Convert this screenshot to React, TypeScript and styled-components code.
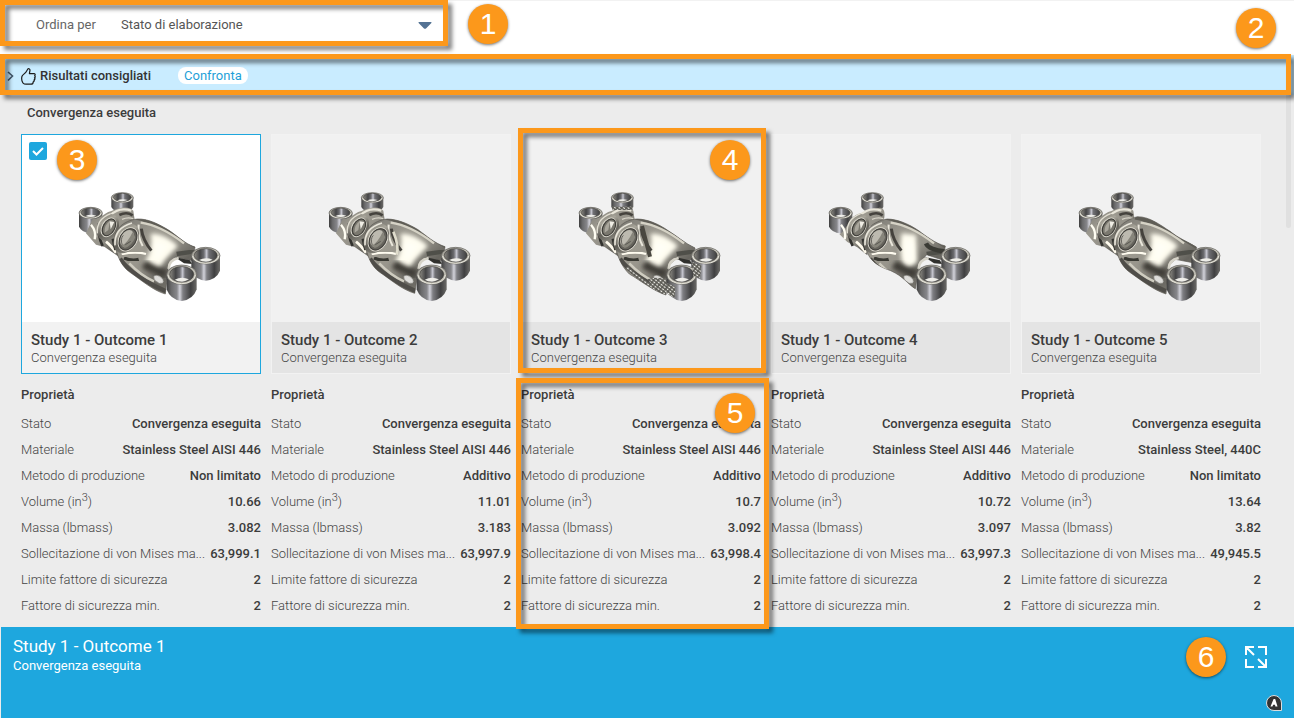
import React from "react";
import styled, { createGlobalStyle } from "styled-components";

const GlobalStyle = createGlobalStyle`
  *, *::before, *::after { box-sizing: border-box; }
  body {
    margin: 0;
    background: #ececec;
    color: #3c3c3c;
    font-family: Roboto, "Noto Sans", sans-serif;
    font-size: 13px;
    line-height: 18px;
  }
  button, select, input { font: inherit; }
`;

const Page = styled.div`
  display: flex;
  flex-direction: column;
  min-height: 100vh;
  overflow-x: hidden;
`;

const Frame = styled.span<{ $inset: string }>`
  position: absolute;
  z-index: 2;
  inset: ${(p) => p.$inset};
  border: 5px solid #fc981b;
  filter: drop-shadow(4px 4px 2px rgba(0, 0, 0, 0.5));
  pointer-events: none;
`;

const Callout = styled.span<{ $place: string }>`
  position: absolute;
  z-index: 3;
  inset: ${(p) => p.$place};
  width: 40px;
  height: 40px;
  border-radius: 50%;
  background: #fc981b;
  box-shadow: 0 1px 3px rgba(0, 0, 0, 0.55);
  color: #fff;
  font-family: "Liberation Sans", sans-serif;
  font-size: 30px;
  line-height: 40px;
  text-align: center;
`;

const Toolbar = styled.header`
  position: relative;
  height: 55px;
  border-top: 1px solid #f2f2f2;
  background: #fff;
`;

const SortField = styled.div`
  position: relative;
  display: flex;
  align-items: center;
  width: 448px;
  height: 46px;
  padding: 2px 9px 0 36px;
  color: #666;
`;

const SortLabel = styled.label`
  flex: 0 0 85px;
`;

const SortSelect = styled.select`
  flex: 1;
  height: 32px;
  padding: 0;
  border: 0;
  background: transparent;
  color: #555;
  appearance: none;
  outline: none;
`;

const SelectArrow = styled.svg`
  position: absolute;
  right: 16px;
  width: 14px;
  height: 7px;
  fill: #547394;
  pointer-events: none;
`;

const Banner = styled.section`
  position: relative;
  display: flex;
  align-items: center;
  height: 40px;
  padding: 0 6px;
  background: #c9ecff;
`;

const Disclosure = styled.button`
  display: flex;
  align-items: center;
  padding: 2px 0 0;
  border: 0;
  background: none;
  color: #333;
  font-weight: 500;

  svg:first-child { margin-right: 6px; }
  svg:last-of-type { margin-right: 4px; }
`;

const CompareButton = styled.button`
  height: 17px;
  margin-left: 27px;
  padding: 0 6px;
  border: 0;
  border-radius: 8px;
  background: #fff;
  color: #1f9fd8;
  line-height: 17px;
`;

const Results = styled.main`
  position: relative;
  padding: 8px 33px 8px 21px;
`;

const ScrollThumb = styled.span`
  position: absolute;
  top: 0;
  right: 3px;
  width: 5px;
  height: 133px;
  border-radius: 0 0 3px 3px;
  background: #e0e0e0;
`;

const GroupTitle = styled.h2`
  margin: 0 0 12px 6px;
  font-size: 13px;
  line-height: 19px;
  font-weight: 500;
`;

const OutcomeGrid = styled.div`
  display: grid;
  grid-template-columns: repeat(5, minmax(0, 1fr));
  column-gap: 10px;
`;

const Outcome = styled.article`
  position: relative;
`;

const Card = styled.div<{ $selected: boolean }>`
  position: relative;
  border: 1px solid ${(p) => (p.$selected ? "#1ea7de" : "#f2f2f2")};
  background: ${(p) => (p.$selected ? "#fff" : "#f1f1f1")};
`;

const Preview = styled.svg`
  display: block;
  width: 100%;
  height: 187px;
`;

const CardFooter = styled.div<{ $selected: boolean }>`
  height: 51px;
  padding: 8px 9px;
  background: ${(p) => (p.$selected ? "#f2f2f2" : "#e4e4e4")};
`;

const CardTitle = styled.h3`
  margin: 0;
  font-size: 15px;
  line-height: 20px;
  font-weight: 500;
`;

const CardStatus = styled.p`
  margin: 0;
  line-height: 16px;
  color: #444;
  font-weight: 300;
`;

const Tick = styled.input`
  position: absolute;
  top: 7px;
  left: 7px;
  width: 18px;
  height: 18px;
  margin: 0;
  border-radius: 2px;
  background: #1ea7de;
  appearance: none;
`;

const TickMark = styled.svg`
  position: absolute;
  top: 7px;
  left: 7px;
  width: 18px;
  height: 18px;
  pointer-events: none;
`;

const Properties = styled.div`
  position: relative;
  margin-top: 10px;
`;

const PropertyTable = styled.table`
  display: block;
  width: 100%;
  border-spacing: 0;

  caption {
    display: block;
    height: 27px;
    line-height: 22px;
    text-align: left;
    font-weight: 500;
  }
  tbody { display: block; }
  tr {
    display: flex;
    justify-content: space-between;
    height: 26px;
    line-height: 26px;
    white-space: nowrap;
  }
  th {
    padding: 0;
    color: #444;
    font-weight: 300;
    text-align: left;
  }
  td {
    padding: 0;
    font-weight: 500;
  }
  sup {
    font-size: 11px;
    line-height: 0;
  }
`;

const StatusBar = styled.footer`
  position: relative;
  display: flex;
  flex: 1;
  align-items: flex-start;
  justify-content: space-between;
  min-height: 91px;
  margin-left: 1px;
  padding: 9px 27px 9px 12px;
  background: #1ea7de;
  color: #fff;
`;

const StatusTitle = styled.h2`
  margin: 0;
  font-size: 17px;
  line-height: 20px;
  font-weight: 400;
`;

const StatusText = styled.p`
  margin: 0;
  line-height: 20px;
`;

const ExpandButton = styled.button`
  width: 22px;
  height: 22px;
  margin-top: 10px;
  padding: 0;
  border: 0;
  background: none;
  color: #fff;

  svg { display: block; }
`;

const Badge = styled.svg`
  position: absolute;
  right: 12px;
  bottom: 7px;
`;

const HiddenDefs = styled.svg`
  position: absolute;
`;

const PartDefs = () => (
  <HiddenDefs width="0" height="0" aria-hidden="true">
    <defs>
      <linearGradient id="tube" x1="0" x2="1" y1="0" y2="0">
        <stop offset="0" stopColor="#3f3f3f" />
        <stop offset="0.15" stopColor="#6a6a6b" />
        <stop offset="0.34" stopColor="#87878b" />
        <stop offset="0.44" stopColor="#d2d2da" />
        <stop offset="0.54" stopColor="#7f7f83" />
        <stop offset="0.8" stopColor="#404041" />
        <stop offset="1" stopColor="#6c6b68" />
      </linearGradient>
      <linearGradient id="bore" x1="0" x2="1" y1="0" y2="0">
        <stop offset="0" stopColor="#8b8982" />
        <stop offset="0.25" stopColor="#444445" />
        <stop offset="0.42" stopColor="#6c6c70" />
        <stop offset="0.54" stopColor="#c6c6cf" />
        <stop offset="0.64" stopColor="#707074" />
        <stop offset="1" stopColor="#3e3e3e" />
      </linearGradient>
      <linearGradient id="rim" x1="0" x2="1" y1="0" y2="1">
        <stop offset="0" stopColor="#8d8b83" />
        <stop offset="0.5" stopColor="#c9c7bd" />
        <stop offset="1" stopColor="#a5a39a" />
      </linearGradient>
      <linearGradient id="metal" x1="0.1" x2="0.8" y1="0.1" y2="0.9">
        <stop offset="0" stopColor="#83817a" />
        <stop offset="0.3" stopColor="#9d9a90" />
        <stop offset="0.55" stopColor="#96938a" />
        <stop offset="0.8" stopColor="#66645e" />
        <stop offset="1" stopColor="#7c7a73" />
      </linearGradient>
      <linearGradient id="ring" x1="0" x2="1" y1="0" y2="1">
        <stop offset="0" stopColor="#69675f" />
        <stop offset="0.3" stopColor="#a9a69b" />
        <stop offset="0.6" stopColor="#605e57" />
        <stop offset="1" stopColor="#96948b" />
      </linearGradient>
      <filter id="soft" x="-40%" y="-40%" width="180%" height="180%">
        <feGaussianBlur stdDeviation="7" />
      </filter>
      <filter id="fine" x="-40%" y="-40%" width="180%" height="180%">
        <feGaussianBlur stdDeviation="2" />
      </filter>
      <pattern id="lattice" width="11" height="8" patternUnits="userSpaceOnUse" patternTransform="rotate(38)">
        <rect width="11" height="8" fill="#5a5953" />
        <ellipse cx="5" cy="4" rx="4" ry="2" fill="#f1f0ea" />
      </pattern>
    </defs>
  </HiddenDefs>
);

const Tube = ({ x, y, rx, ry, depth }: { x: number; y: number; rx: number; ry: number; depth: number }) => (
  <g>
    <path
      d={`M${x - rx} ${y} V${y + depth - ry * 0.4} Q${x - rx * 0.75} ${y + depth + ry * 0.65} ${x} ${y + depth + ry * 0.8} Q${x + rx * 0.75} ${y + depth + ry * 0.65} ${x + rx} ${y + depth - ry * 0.4} V${y} Z`}
      fill="url(#tube)"
    />
    <ellipse cx={x} cy={y} rx={rx} ry={ry} fill="url(#rim)" stroke="#5a5954" strokeWidth="2" />
    <path
      d={`M${x - rx + 4} ${y + 1} A${rx - 4} ${ry - 3} 0 0 0 ${x + rx - 4} ${y + 1}`}
      fill="none"
      stroke="#e6e4da"
      strokeWidth="3"
    />
    <ellipse cx={x} cy={y - 1} rx={rx * 0.8} ry={ry * 0.8} fill="url(#bore)" stroke="#45443f" strokeWidth="2" />
    <path
      d={`M${x - rx * 0.46} ${y + ry * 0.52} Q${x} ${y + ry * 0.14} ${x + rx * 0.48} ${y + ry * 0.48} Q${x} ${y + ry * 0.92} ${x - rx * 0.46} ${y + ry * 0.52} Z`}
      fill="#efeee9"
    />
  </g>
);

const BODIES = [
  "M163 184 C162 148 190 122 232 117 C262 116 292 130 322 148 C350 165 374 192 405 201 L398 242 L345 231 L326 252 L316 342 C280 332 242 299 210 277 C184 259 169 226 163 184 Z",
  "M163 184 C162 148 190 122 232 117 C264 118 296 132 324 149 C350 168 374 190 405 200 L398 242 L346 234 L328 252 L314 340 C274 328 240 297 208 276 C184 259 170 226 163 184 Z",
  "M163 184 C162 148 190 119 232 117 C264 118 296 132 326 153 C350 167 374 190 405 204 L398 240 L346 238 L326 256 L318 345 C278 332 240 300 208 282 C190 264 172 238 163 184 Z",
  "M165 184 C162 148 190 124 232 117 C264 118 296 132 326 152 C350 170 376 190 406 198 L398 240 L350 224 L328 250 L316 326 C290 310 282 290 242 272 C202 258 168 240 165 184 Z",
  "M163 184 C162 148 190 122 232 110 C270 110 302 136 330 154 C356 176 386 186 410 202 L398 248 L346 238 L326 256 L318 342 C280 330 240 298 208 276 C184 259 170 226 163 184 Z",
];

const Bracket = ({ index }: { index: number }) => {
  const clip = `body-${index}`;
  const body = BODIES[index];
  const meshed = index === 2;
  const narrow = index === 3;
  return (
    <Preview viewBox="-114 -135 714 561" aria-hidden="true">
      <clipPath id={clip}>
        <path d={body} />
      </clipPath>
      <Tube x={187} y={53} rx={33} ry={15} depth={34} />
      <Tube x={92} y={99} rx={35} ry={17} depth={48} />
      {/* neck joining the rear tubes */}
      <path
        d={
          narrow
            ? "M88 162 C106 158 114 118 144 102 L205 84 C224 80 226 100 222 118 L176 142 L172 226 L142 202 L112 186 Z"
            : "M78 160 L98 116 C122 118 130 100 152 94 C178 82 206 76 220 92 L224 120 L182 150 L176 230 L134 201 L108 194 Z"
        }
        fill="url(#metal)"
      />
      <path d="M93 134 Q110 154 104 178" fill="none" stroke="#fffdf2" strokeWidth="7" filter="url(#fine)" />
      <path d="M117 130 Q112 166 128 198" fill="none" stroke="#33322f" strokeWidth="8" filter="url(#fine)" />
      <path d="M150 107 Q176 80 214 92" fill="none" stroke="#e8e5d9" strokeWidth="7" filter="url(#fine)" />
      <path d="M178 105 Q200 94 218 106" fill="none" stroke="#45433e" strokeWidth="8" filter="url(#fine)" />
      <path d="M186 118 Q204 110 220 116" fill="none" stroke="#d8d5c9" strokeWidth="4" filter="url(#fine)" />
      <path d="M138 185 Q152 196 168 218" fill="none" stroke="#fffbee" strokeWidth="8" filter="url(#fine)" />
      <path d="M158 176 Q162 196 166 210" fill="none" stroke="#33322f" strokeWidth="7" filter="url(#fine)" />
      {/* rear ring */}
      <ellipse cx="144" cy="142" rx="31" ry="42" transform="rotate(26 144 142)" fill="url(#ring)" />
      <path d="M112 160 Q108 118 152 101" fill="none" stroke="#e2dfd3" strokeWidth="4" filter="url(#fine)" />
      <ellipse cx="146" cy="142" rx="20" ry="30" transform="rotate(30 146 142)" fill="#6e6c65" stroke="#dcdacf" strokeWidth="3" />
      <ellipse cx="147" cy="142" rx="17" ry="27" transform="rotate(30 147 142)" fill="#7a786f" stroke="#3d3c38" strokeWidth="3" />
      <path d="M134 158 Q132 134 150 123 L145 150 Z" fill="#aaa79d" />
      <path d="M149 124 L163 126 L152 148 Z" fill="#f0eee6" />
      {/* main web */}
      <path d={body} fill="url(#metal)" stroke="#5a5851" strokeWidth="2" />
      <g clipPath={`url(#${clip})`}>
        <path d="M225 112 C286 122 350 162 410 200" fill="none" stroke="#5f5d56" strokeWidth="13" filter="url(#fine)" />
        <path d="M242 128 C286 134 328 156 372 190" fill="none" stroke="#d6d3c6" strokeWidth="7" filter="url(#fine)" />
        <path
          d={narrow ? "M275 160 L318 164 L322 246 L286 272 Q264 226 275 160 Z" : "M272 162 Q308 156 354 198 L318 236 L288 276 L256 240 Q280 212 272 162 Z"}
          fill="#fffdf0"
          filter="url(#soft)"
        />
        <path
          d={narrow ? "M286 180 L308 184 L308 236 L290 250 Z" : "M286 184 L326 196 L304 226 L284 246 Z"}
          fill="#fffef6"
          filter="url(#soft)"
        />
        <path d="M244 146 Q248 180 274 212" fill="none" stroke="#45433e" strokeWidth="9" filter="url(#fine)" />
        <path d="M236 134 Q232 170 248 198" fill="none" stroke="#eae7dc" strokeWidth="6" filter="url(#fine)" />
        <path d="M252 252 Q274 268 318 282" fill="none" stroke="#3f3e38" strokeWidth="26" filter="url(#soft)" />
        <path d="M185 222 Q230 214 258 222" fill="none" stroke="#fffcf0" strokeWidth="7" filter="url(#fine)" />
        <path d="M192 234 Q216 244 236 238" fill="none" stroke="#393833" strokeWidth="10" filter="url(#fine)" />
        <path d="M180 236 Q214 286 318 334" fill="none" stroke="#504e48" strokeWidth="13" filter="url(#fine)" />
        <path d="M208 250 Q242 286 282 304" fill="none" stroke="#cfccc0" strokeWidth="7" filter="url(#fine)" />
        <ellipse cx="296" cy="298" rx="16" ry="9" transform="rotate(35 296 298)" fill="#deddda" filter="url(#fine)" />
        <path d="M350 222 L404 214" stroke="#504f49" strokeWidth="13" filter="url(#fine)" />
        {index === 1 && <path d="M250 155 Q268 198 260 224" fill="none" stroke="#dfdccc" strokeWidth="8" filter="url(#fine)" />}
        {meshed && (
          <>
            <path d="M246 138 L270 230" stroke="#49473f" strokeWidth="12" filter="url(#fine)" />
            <path d="M262 298 Q286 288 322 298 L322 350 L300 342 Z" fill="url(#lattice)" />
            <path d="M200 262 Q250 310 316 340" fill="none" stroke="url(#lattice)" strokeWidth="10" />
          </>
        )}
        {narrow && <path d="M348 190 Q356 210 406 214" fill="none" stroke="#3b3b36" strokeWidth="13" filter="url(#fine)" />}
      </g>
      {/* front ring */}
      <ellipse cx="199" cy="175" rx="34" ry="48" transform="rotate(32 199 175)" fill="url(#ring)" />
      <path d="M165 196 Q162 144 216 129" fill="none" stroke="#e8e5da" strokeWidth="5" filter="url(#fine)" />
      <ellipse cx="204" cy="178" rx="27" ry="37" transform="rotate(30 204 178)" fill="#8c8980" stroke="#dedbd0" strokeWidth="3" />
      <ellipse cx="204" cy="178" rx="24" ry="34" transform="rotate(30 204 178)" fill="#66645d" stroke="#403f3b" strokeWidth="3" />
      <ellipse cx="201" cy="175" rx="18" ry="27" transform="rotate(30 201 175)" fill="#bdbab0" />
      <path d="M186 196 Q202 190 218 156 L226 172 Q216 198 194 204 Z" fill="#87857b" />
      <path d="M187 196 Q180 176 190 166 M212 184 L196 194" fill="none" stroke="#3f3e3b" strokeWidth="2" />
      {/* slot between the front lugs */}
      {index < 4 && <path d="M344 231 L390 241 L396 252 L372 250 Z" fill="#30302d" />}
      <Tube x={437} y={227} rx={43} ry={25} depth={55} />
      <path d="M326 266 Q326 240 356 234" fill="none" stroke="#d6d3c8" strokeWidth="8" />
      <Tube x={365} y={284} rx={45} ry={29} depth={56} />
      {meshed && (
        <>
          <path d="M321 310 L346 320 L344 352 Q326 348 321 338 Z" fill="url(#lattice)" />
          <path d="M396 246 L424 256 L420 294 L400 288 Z" fill="url(#lattice)" />
          <path d="M156 80 H218 V90 H156 Z" fill="url(#lattice)" />
        </>
      )}
    </Preview>
  );
};

const OUTCOMES = [
  { material: "Stainless Steel AISI 446", method: "Non limitato", volume: "10.66", mass: "3.082", stress: "63,999.1" },
  { material: "Stainless Steel AISI 446", method: "Additivo", volume: "11.01", mass: "3.183", stress: "63,997.9" },
  { material: "Stainless Steel AISI 446", method: "Additivo", volume: "10.7", mass: "3.092", stress: "63,998.4" },
  { material: "Stainless Steel AISI 446", method: "Additivo", volume: "10.72", mass: "3.097", stress: "63,997.3" },
  { material: "Stainless Steel, 440C", method: "Non limitato", volume: "13.64", mass: "3.82", stress: "49,945.5" },
];

const App = () => (
  <Page>
    <GlobalStyle />
    <PartDefs />
    <Toolbar>
      <SortField>
        <SortLabel htmlFor="sort">Ordina per</SortLabel>
        <SortSelect id="sort" defaultValue="stato">
          <option value="stato">Stato di elaborazione</option>
        </SortSelect>
        <SelectArrow viewBox="0 0 14 7">
          <path d="M1 0H13Q14 .4 13.4 1L8 6.4Q7 7 6 6.4L.6 1Q0 .4 1 0Z" />
        </SelectArrow>
        <Frame $inset="-1px 0 1px 0" />
      </SortField>
      <Callout $place="3px auto auto 468px">1</Callout>
      <Callout $place="7px 18px auto auto">2</Callout>
    </Toolbar>
    <Banner>
      <Disclosure aria-expanded="false">
        <svg width="9" height="12" viewBox="0 0 9 12" fill="none" stroke="#42576b" strokeWidth="1.6">
          <path d="M2 2L6.5 6L2 10.5" />
        </svg>
        <svg width="15" height="17" viewBox="0 0 15 17" fill="none" stroke="#1c1c1c" strokeWidth="1.2" strokeLinejoin="round">
          <path d="M7 .7C8 .4 9 1 9 2.2L8.4 5.6H13.2C14.4 5.8 14.5 7.3 13.6 7.7C14.5 8.1 14.5 9.5 13.5 9.9C14.3 10.4 14 11.6 13 12C13.6 12.6 13.1 13.7 12.2 13.9C12.2 15.4 11.2 16.2 9.8 16.2H5C3.7 16.2 2.7 15.7 1.9 14.8C.8 13.3 .5 10.2 1 8.2C1.6 6.6 4.4 5.3 5.2 3.7Z" />
        </svg>
        Risultati consigliati
      </Disclosure>
      <CompareButton>Confronta</CompareButton>
      <Frame $inset="-1px 3px 0 0" />
    </Banner>
    <Results>
      <ScrollThumb />
      <GroupTitle>Convergenza eseguita</GroupTitle>
      <OutcomeGrid>
        {OUTCOMES.map((item, i) => (
          <Outcome key={i}>
            <Card $selected={i === 0}>
              <Bracket index={i} />
              <CardFooter $selected={i === 0}>
                <CardTitle>Study 1 - Outcome {i + 1}</CardTitle>
                <CardStatus>Convergenza eseguita</CardStatus>
              </CardFooter>
              {i === 0 && (
                <>
                  <Tick type="checkbox" defaultChecked aria-label="Study 1 - Outcome 1" />
                  <TickMark viewBox="0 0 18 18" fill="none" stroke="#fff" strokeWidth="2">
                    <path d="M4 9L7.5 12.5L14 6" />
                  </TickMark>
                  <Callout $place="5px auto auto 35px">3</Callout>
                </>
              )}
              {i === 2 && (
                <>
                  <Frame $inset="-7px -6px 0 -4px" />
                  <Callout $place="5px 10px auto auto">4</Callout>
                </>
              )}
            </Card>
            <Properties>
              <PropertyTable>
                <caption>Proprietà</caption>
                <tbody>
                  <tr><th scope="row">Stato</th><td>Convergenza eseguita</td></tr>
                  <tr><th scope="row">Materiale</th><td>{item.material}</td></tr>
                  <tr><th scope="row">Metodo di produzione</th><td>{item.method}</td></tr>
                  <tr><th scope="row">Volume (in<sup>3</sup>)</th><td>{item.volume}</td></tr>
                  <tr><th scope="row">Massa (lbmass)</th><td>{item.mass}</td></tr>
                  <tr><th scope="row">Sollecitazione di von Mises ma...</th><td>{item.stress}</td></tr>
                  <tr><th scope="row">Limite fattore di sicurezza</th><td>2</td></tr>
                  <tr><th scope="row">Fattore di sicurezza min.</th><td>2</td></tr>
                </tbody>
              </PropertyTable>
              {i === 2 && (
                <>
                  <Frame $inset="-6px -8px -10px -5px" />
                  <Callout $place="9px 6px auto auto">5</Callout>
                </>
              )}
            </Properties>
          </Outcome>
        ))}
      </OutcomeGrid>
    </Results>
    <StatusBar>
      <div>
        <StatusTitle>Study 1 - Outcome 1</StatusTitle>
        <StatusText>Convergenza eseguita</StatusText>
      </div>
      <Callout $place="10px 68px auto auto">6</Callout>
      <ExpandButton aria-label="Espandi">
        <svg width="22" height="22" viewBox="0 0 22 22" fill="none" stroke="#fff" strokeWidth="2">
          <path d="M1 9V1H9M13 1H21V9M21 13V21H13M9 21H1V13M1 1L9 9M13 13L21 21" />
        </svg>
      </ExpandButton>
      <Badge width="16" height="16" viewBox="0 0 16 16" aria-hidden="true">
        <path d="M8 .5A7.5 7.5 0 0 1 15.5 8V15.5H8A7.5 7.5 0 0 1 8 .5Z" fill="#333" stroke="#ddd" />
        <path d="M4.5 11.5L7.6 4H9.2L11.5 11.5H9.4L9 9.8H7.2L6.4 11.5Z" fill="#fff" />
      </Badge>
    </StatusBar>
  </Page>
);

export default App;
